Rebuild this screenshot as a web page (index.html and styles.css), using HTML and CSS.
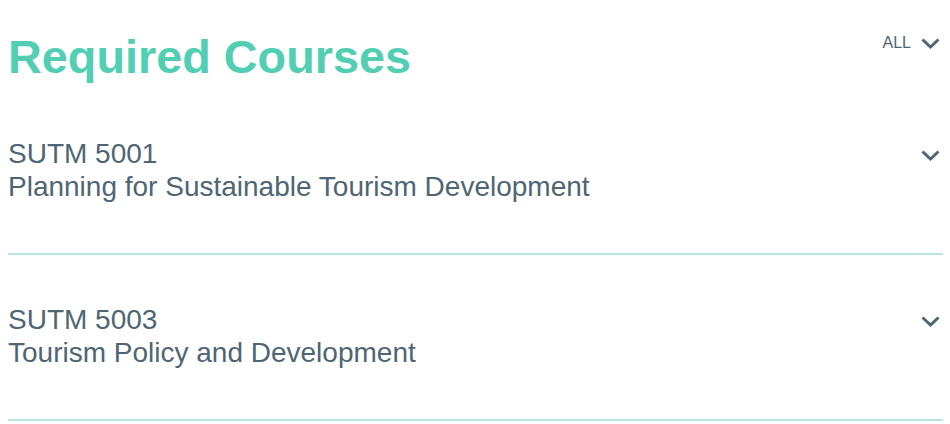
FILE: index.html
```html
<!DOCTYPE html>
<html lang="en">
<head>
    <meta charset="UTF-8">
    <meta name="viewport" content="width=device-width, initial-scale=1.0">
    <title>Required Courses</title>
    <link rel="stylesheet" href="styles.css">
</head>
<body>
    <div class="container">
        <div class="header">
            <h1>Required Courses</h1>
            <div class="filter">
                <span>ALL</span>
                <svg class="chevron" width="19" height="11" viewBox="0 0 19 11"><path d="M1.5 1.5 L9.5 9 L17.5 1.5" /></svg>
            </div>
        </div>

        <div class="course">
            <div class="course-text">
                <p>SUTM 5001</p>
                <p>Planning for Sustainable Tourism Development</p>
            </div>
            <svg class="chevron" width="19" height="11" viewBox="0 0 19 11"><path d="M1.5 1.5 L9.5 9 L17.5 1.5" /></svg>
        </div>

        <div class="course">
            <div class="course-text">
                <p>SUTM 5003</p>
                <p>Tourism Policy and Development</p>
            </div>
            <svg class="chevron" width="19" height="11" viewBox="0 0 19 11"><path d="M1.5 1.5 L9.5 9 L17.5 1.5" /></svg>
        </div>
    </div>
</body>
</html>
```

FILE: styles.css
```css
*{
    margin: 0;
    padding: 0;
    box-sizing: border-box;
}

body{
    background: #fff;
    font-family: "Liberation Sans", Arial, sans-serif;
    color: #4e6673;
}

.container{
    padding: 0 7px 0 8px;
}

.header{
    display: flex;
    justify-content: space-between;
    align-items: flex-start;
    padding-top: 30px;
    height: 89px;
}

.header h1{
    font-size: 46.8px;
    font-weight: 700;
    line-height: 55px;
    color: #52cfb3;
}

.filter{
    display: flex;
    align-items: center;
    gap: 10px;
    margin-top: 3px;
    padding-right: 3px;
    font-size: 16px;
    line-height: 20px;
}

.chevron{
    display: block;
    fill: none;
    stroke: #4e6673;
    stroke-width: 3;
}

.course{
    display: flex;
    justify-content: space-between;
    align-items: flex-start;
    padding: 48px 3px 50px 0;
    border-bottom: 2px solid #b9e4e1;
}

.course-text p{
    font-size: 28px;
    line-height: 33px;
}

.course .chevron{
    margin-top: 13px;
}
```
